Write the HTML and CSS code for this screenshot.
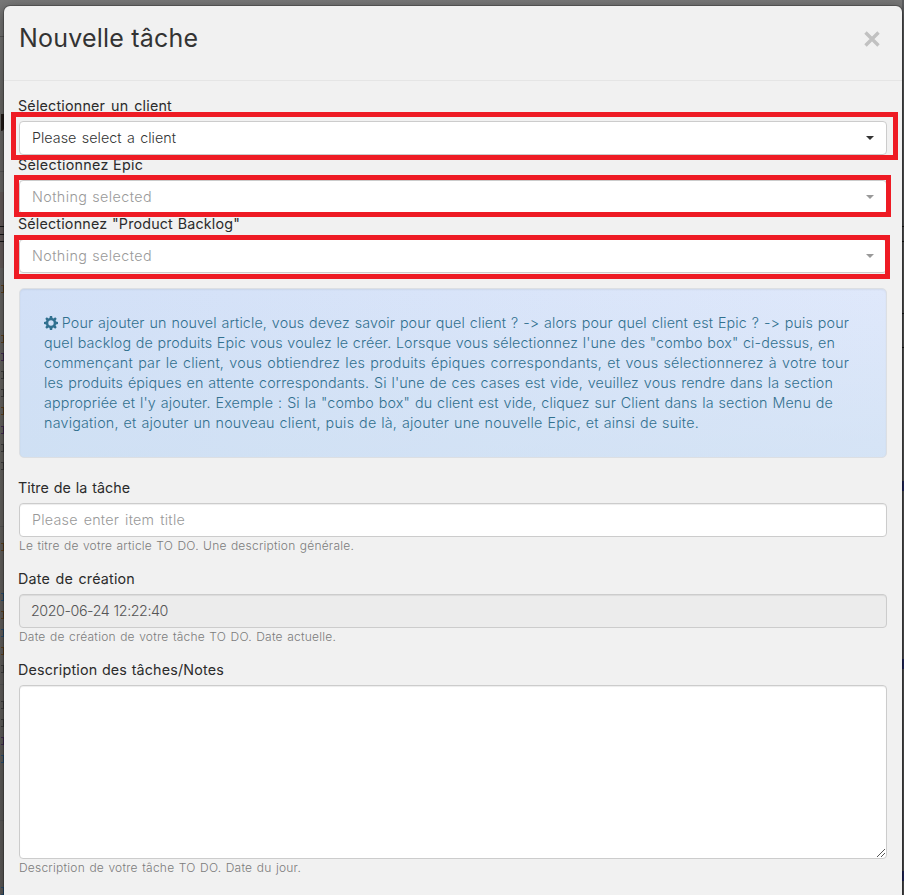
FILE: index.html
```html
<!DOCTYPE html>
<html lang="fr">
<head>
<meta charset="utf-8">
<title>Nouvelle tâche</title>
<link rel="stylesheet" href="styles.css">
</head>
<body>
<div class="backdrop backdrop-left" aria-hidden="true">
  <i class="rule" style="top:36px"></i><i class="heading"></i><i class="rule" style="top:171px"></i>
  <i class="panel"></i><i class="line" style="top:226px"></i><i class="line" style="top:234px"></i><i class="line" style="top:241px"></i>
  <i class="bit orange" style="top:285px"></i><i class="bit orange" style="top:335px"></i><i class="bit purple" style="top:353px"></i><i class="bit" style="top:371px"></i><i class="bit" style="top:389px"></i><i class="bit orange" style="top:407px"></i><i class="bit purple" style="top:426px"></i><i class="bit" style="top:444px"></i><i class="bit" style="top:462px"></i>
  <i class="rule" style="top:526px"></i><i class="bit orange" style="top:543px"></i><i class="bit blue" style="top:593px"></i><i class="bit orange" style="top:611px"></i><i class="bit blue" style="top:629px"></i><i class="bit orange" style="top:647px"></i><i class="bit" style="top:665px"></i><i class="rule" style="top:684px"></i>
  <i class="bit" style="top:701px"></i><i class="bit" style="top:719px"></i><i class="bit purple" style="top:737px"></i><i class="bit blue" style="top:755px"></i><i class="rule" style="top:820px"></i><i class="bit blue" style="top:887px"></i>
</div>
<div class="backdrop backdrop-right" aria-hidden="true">
  <i class="line" style="top:226px"></i><i class="line" style="top:241px"></i><i class="line" style="top:313px"></i><i class="line" style="top:347px"></i>
  <i class="mark" style="top:481px"></i><i class="mark" style="top:659px"></i><i class="mark" style="top:871px"></i>
</div>
<main class="modal">
  <header class="modal-header">
    <h4>Nouvelle tâche</h4>
    <button class="close" aria-label="Fermer"><svg width="16" height="16" viewBox="0 0 16 16"><path d="M1.500 1.500 14.500 14.500M14.500 1.500 1.500 14.500"/></svg></button>
  </header>
  <form class="modal-body">
    <div class="field">
      <label class="l-client">Sélectionner un client</label>
      <div class="control select"><span class="v-client">Please select a client</span><i class="caret"></i></div>
      <div class="highlight h-client"></div>
    </div>
    <div class="field">
      <label class="l-epic">Sélectionnez Epic</label>
      <div class="control select disabled"><span class="v-none">Nothing selected</span><i class="caret"></i></div>
      <div class="highlight h-epic"></div>
    </div>
    <div class="field">
      <label class="l-backlog">Sélectionnez "Product Backlog"</label>
      <div class="control select disabled"><span class="v-none">Nothing selected</span><i class="caret"></i></div>
      <div class="highlight h-backlog"></div>
    </div>
    <div class="well">
      <p class="w1"><svg class="gear" width="14" height="14" viewBox="0 0 14 14"><path fill-rule="evenodd" d="M5.900 0h2.200l.4 2 1 .4 1.700-1.100 1.500 1.500-1.100 1.700.4 1 2 .4v2.200l-2 .4-.4 1 1.100 1.700-1.500 1.500-1.700-1.100-1 .4-.4 2H5.900l-.4-2-1-.4-1.700 1.100-1.500-1.500 1.100-1.700-.4-1-2-.4V5.900l2-.4.4-1-1.100-1.700 1.500-1.500 1.700 1.100 1-.4zM7 4.300a2.700 2.700 0 1 0 0 5.400 2.700 2.700 0 0 0 0-5.400z"/></svg> Pour ajouter un nouvel article, vous devez savoir pour quel client ? -&gt; alors pour quel client est Epic ? -&gt; puis pour</p>
      <p class="w2">quel backlog de produits Epic vous voulez le créer. Lorsque vous sélectionnez l'une des "combo box" ci-dessus, en</p>
      <p class="w3">commençant par le client, vous obtiendrez les produits épiques correspondants, et vous sélectionnerez à votre tour</p>
      <p class="w4">les produits épiques en attente correspondants. Si l'une de ces cases est vide, veuillez vous rendre dans la section</p>
      <p class="w5">appropriée et l'y ajouter. Exemple : Si la "combo box" du client est vide, cliquez sur Client dans la section Menu de</p>
      <p class="w6">navigation, et ajouter un nouveau client, puis de là, ajouter une nouvelle Epic, et ainsi de suite.</p>
    </div>
    <div class="field spaced">
      <label class="l-title">Titre de la tâche</label>
      <div class="control inset placeholder"><span class="v-title">Please enter item title</span></div>
      <small class="s-title">Le titre de votre article TO DO. Une description générale.</small>
    </div>
    <div class="field spaced">
      <label class="l-date">Date de création</label>
      <div class="control inset readonly"><span class="v-date">2020-06-24 12:22:40</span></div>
      <small class="s-date">Date de création de votre tâche TO DO. Date actuelle.</small>
    </div>
    <div class="field spaced">
      <label class="l-desc">Description des tâches/Notes</label>
      <div class="control inset textarea"><svg class="grip" width="10" height="10" viewBox="0 0 10 10"><path d="M1 9 9 1M5 9l4-4"/></svg></div>
      <small class="s-desc">Description de votre tâche TO DO. Date du jour.</small>
    </div>
  </form>
</main>
</body>
</html>
```
FILE: styles.css
```css
* { box-sizing: border-box; }
html, body { height: 895px; overflow: hidden; }
body {
  margin: 0;
  padding: 6px 2px 0 4px;
  position: relative;
  background: linear-gradient(#777 0, #696866 100px, #666461 400px, #5d5b59);
  font: 300 14.300px/20px Inter, "Open Sans", sans-serif;
  font-variant-ligatures: none;
  font-feature-settings: "calt" 0;
  color: #333;
}
.modal {
  position: relative;
  height: 900px;
  background: #f1f1f1;
  border-radius: 6px 6px 0 0;
  box-shadow: 0 0 0 1px rgba(0,0,0,.22), 0 3px 12px rgba(0,0,0,.45);
}
.modal-header {
  display: flex;
  justify-content: space-between;
  height: 75px;
  padding: 15px 22px 0 15px;
  border-bottom: 1px solid #e5e5e5;
}
h4 { margin: 0; font-size: 25px; line-height: 34px; font-weight: 400; letter-spacing: .2px; white-space: nowrap; }
.close { padding: 0; margin-top: 10px; height: 16px; border: 0; background: none; }
.close svg { display: block; fill: none; stroke: #c1c1c1; stroke-width: 3.4; }
.modal-body { padding: 15px; }
.field { position: relative; }
.field.spaced { margin-bottom: 15px; }
label { display: block; height: 25px; white-space: nowrap; font-weight: 400; color: #2b2b2b; margin-left: -1px; letter-spacing: .2px; }
label, .control span, small, .well p { text-align-last: justify; }
.control {
  display: flex;
  align-items: center;
  height: 34px;
  padding: 0 12px;
  border: 1px solid #ccc;
  border-radius: 4px;
  background: #fff;
  white-space: nowrap;
}
.select { justify-content: space-between; }
.disabled { color: #999; }
.inset { box-shadow: inset 0 1px 1px rgba(0,0,0,.075); }
.placeholder { color: #999; }
.readonly { background: #ececec; color: #555; }
.textarea { height: 174px; padding: 0; justify-content: flex-end; align-items: flex-end; }
.grip { fill: none; stroke: #555; stroke-width: 1; }
.caret { border: 4px solid transparent; border-top-color: currentColor; border-bottom: 0; }
small { display: block; height: 17px; font-size: 12px; line-height: 17px; color: #7c7c7c; white-space: nowrap; letter-spacing: .22px; }
.highlight { position: absolute; border: 5px solid #ee1b24; pointer-events: none; z-index: 2; }
.h-client { left: -8px; right: -11px; top: 16px; height: 48px; }
.h-epic { left: -5px; right: -4px; top: 20px; height: 42px; }
.h-backlog { left: -5px; right: -3px; top: 21px; height: 44px; }
.well {
  height: 170px;
  margin: 15px 0 20px;
  padding: 24px;
  border: 1px solid #dcdfe3;
  border-radius: 5px;
  background: linear-gradient(to top, rgba(205,224,241,.55), rgba(220,230,250,0)), linear-gradient(to right, #d2e0f7, #dfe8fb);
  box-shadow: inset 0 1px 2px rgba(0,0,0,.06);
  color: #31708f;
}
.well p { margin: 0; white-space: nowrap; letter-spacing: .12px; }
.gear { fill: #31708f; vertical-align: -2px; margin-right: -1px; }
.w1 { width: 805px; }
.w2 { width: 791px; }
.w3 { width: 805px; }
.w4 { width: 789px; }
.w5 { width: 789px; }
.w6 { width: 655px; }
.well .w3, .well .w6 { letter-spacing: .22px; }
.l-client { width: 154px; }
.l-epic { width: 125px; letter-spacing: .3px; }
.l-backlog { width: 222px; letter-spacing: .18px; }
.l-title { width: 112px; letter-spacing: 0; }
.l-date { width: 117px; }
.l-desc { width: 206px; letter-spacing: .18px; }
.v-client { width: 144px; letter-spacing: .02px; }
.v-none { width: 120px; letter-spacing: .42px; }
.v-title { width: 153px; letter-spacing: .25px; }
.v-date { width: 137px; margin-left: -1px; letter-spacing: -.43px; }
.s-title { width: 335px; }
.s-date { width: 317px; }
.s-desc { width: 282px; }

/* Dimmed page showing either side of the dialog */
.backdrop { position: absolute; top: 0; height: 895px; overflow: hidden; }
.backdrop-left { left: 0; width: 4px; }
.backdrop-right { right: 0; width: 2px; background: rgba(60,62,66,.45); }
.backdrop > * { position: absolute; right: 0; }
.bit { width: 3px; height: 8px; border: 1px solid #3d3d3d; border-left: 0; }
.orange { border-color: #60421d; }
.purple { border-color: #442b55; }
.blue { border-color: #285074; }
.heading { top: 114px; width: 3px; height: 17px; border-right: 3px solid #211a16; border-radius: 0 0 3px 0; }
.rule { width: 4px; height: 1px; background: #565656; }
.line { width: 4px; height: 1px; background: #151515; }
.panel { top: 192px; width: 4px; height: 76px; background: #665c5b; z-index: -1; }
.mark { width: 2px; height: 10px; background: #22265c; }
```
